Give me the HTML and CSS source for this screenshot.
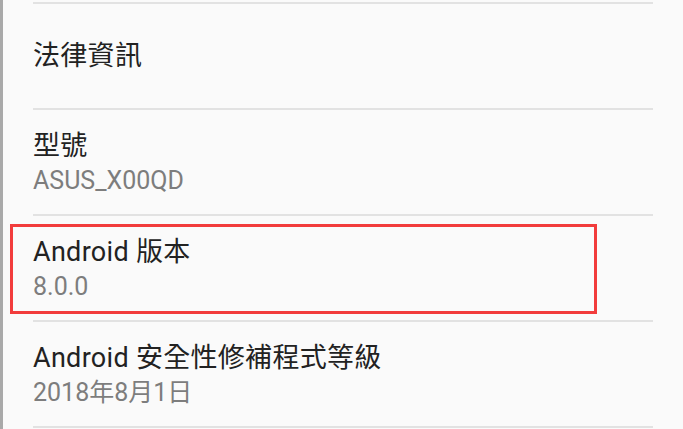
FILE: index.html
```html
<!DOCTYPE html>
<html lang="zh-Hant">
<head>
  <meta charset="UTF-8">
  <meta name="viewport" content="width=device-width, initial-scale=1.0">
  <title>關於手機</title>
  <link rel="stylesheet" href="styles.css">
</head>
<body>
  <div class="page">
    <!-- Settings list -->
    <ul class="prefs">
      <li class="pref single">
        <div class="pref-title">法律資訊</div>
      </li>
      <li class="pref">
        <div class="pref-title">型號</div>
        <div class="pref-summary">ASUS_X00QD</div>
      </li>
      <li class="pref marked">
        <div class="pref-title">Android 版本</div>
        <div class="pref-summary">8.0.0</div>
        <span class="highlight"></span>
      </li>
      <li class="pref">
        <div class="pref-title">Android 安全性修補程式等級</div>
        <div class="pref-summary">2018年8月1日</div>
      </li>
    </ul>
  </div>
</body>
</html>
```

FILE: styles.css
```css
/* General Styling */
body {
  margin: 0;
  background: #fafafa;
  font-family: Roboto, "Noto Sans CJK TC", sans-serif;
  overflow: hidden;
}

.page {
  height: 429px;
  border-left: 3px solid #a9a9a9;
  padding-top: 2px;
  box-sizing: border-box;
}

.prefs {
  list-style: none;
  margin: 0 0 0 30px;
  padding: 0;
  width: 620px;
  border-bottom: 2px solid #e2e2e2;
}

.pref {
  position: relative;
  height: 106px;
  border-top: 2px solid #e2e2e2;
  padding: 18px 0 0;
  box-sizing: border-box;
}

.pref.single {
  display: flex;
  align-items: center;
  padding: 0;
}

.pref-title {
  font-size: 27px;
  line-height: 36px;
  letter-spacing: 0.3px;
  color: #222;
}

.pref-summary {
  font-size: 25px;
  line-height: 34px;
  color: #7d7d7d;
}

/* Red marker drawn round the version row */
.highlight {
  position: absolute;
  left: -23px;
  top: 8px;
  width: 581px;
  height: 84px;
  border: 3px solid #f23c3c;
}
```
